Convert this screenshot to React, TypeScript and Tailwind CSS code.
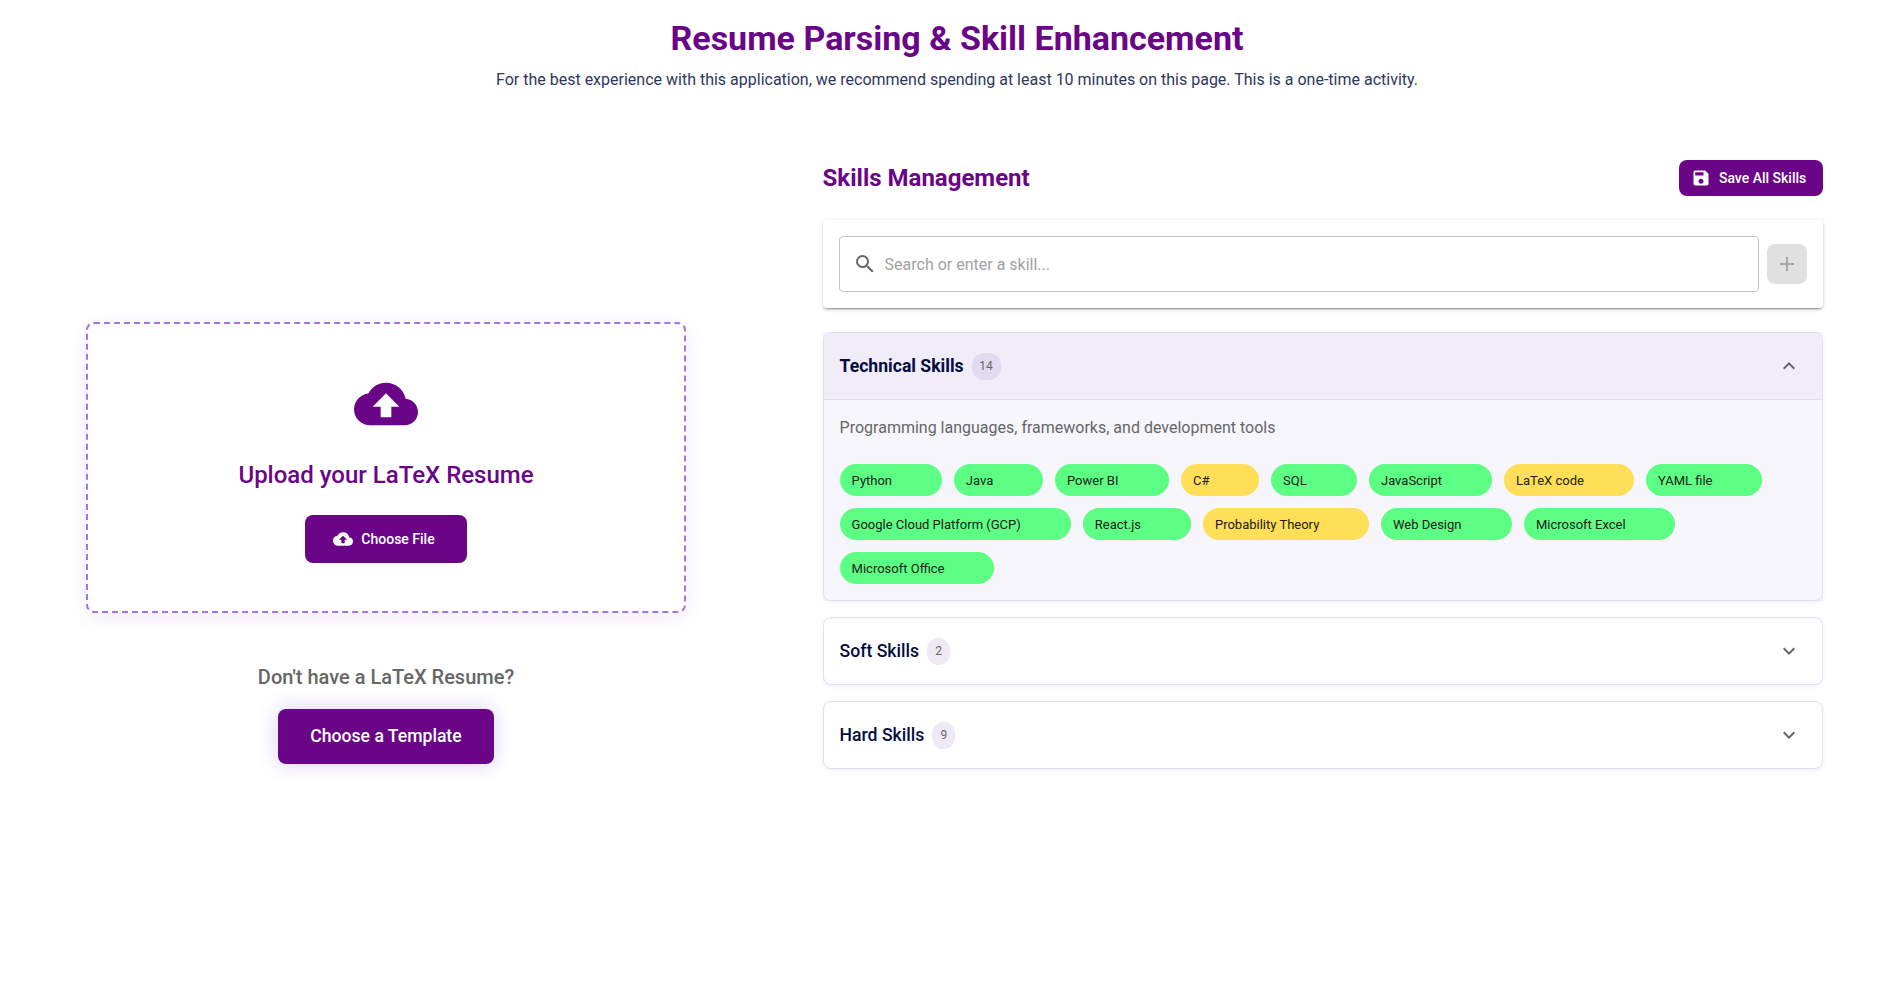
import { MdCloudUpload, MdSave, MdSearch, MdAdd, MdExpandMore } from "react-icons/md";

const skills: [string, number, boolean?][] = [
  ["Python", 102.2], ["Java", 89.2], ["Power BI", 114], ["C#", 78, true], ["SQL", 86], ["JavaScript", 123],
  ["LaTeX code", 130, true], ["YAML file", 116], ["Google Cloud Platform (GCP)", 231.2], ["React.js", 108.2],
  ["Probability Theory", 166, true], ["Web Design", 131], ["Microsoft Excel", 151], ["Microsoft Office", 154],
];

function Closed({ title, count }: { title: string; count: number }) {
  return (
    <section className="mt-4 flex h-[68px] items-center rounded-lg border border-[#e2dff2] bg-white px-4 shadow-[0_2px_4px_rgba(90,60,160,0.08)]">
      <h3 className="text-[17.6px] font-medium text-[#030b3f]">{title}</h3>
      <span className="ml-2 flex h-[27px] w-[23px] items-center justify-center rounded-[12px] bg-[#efe9f6] pb-px text-[12px] text-[#666]">{count}</span>
      <MdExpandMore className="mr-[5px] ml-auto size-6 text-[#666]" />
    </section>
  );
}

export default function App() {
  return (
    <main className="h-[985px] overflow-hidden bg-white font-['Roboto',sans-serif]">
      <header className="pt-[17px] pl-[26px] text-center">
        <h1 className="text-[34px] leading-[42px] font-bold text-[#6a0588]">Resume Parsing &amp; Skill Enhancement</h1>
        <p className="mt-[9px] text-[16px] leading-6 text-[#2f365f]">For the best experience with this application, we recommend spending at least 10 minutes on this page. This is a one-time activity.</p>
      </header>
      <div className="flex pt-[68px] pl-[86px]">
        <div className="flex w-[600px] flex-col items-center pt-[162px]">
          <section className="flex h-[291px] w-[600px] flex-col items-center rounded-lg border-2 border-dashed border-[#a374e6] pt-[48px] shadow-[0_4px_20px_rgba(106,60,190,0.1)]">
            <MdCloudUpload className="size-16 text-[#6a0588]" />
            <h2 className="mt-[23px] text-[24px] leading-8 font-medium text-[#6a0588]">Upload your LaTeX Resume</h2>
            <button className="mt-6 flex h-12 w-[162px] items-center justify-center gap-2 rounded-lg bg-[#6a0588] pr-1 text-[14px] font-medium text-white"><MdCloudUpload className="size-5" />Choose File</button>
          </section>
          <p className="mt-[48px] text-[20px] leading-8 font-medium text-[#666]">Don't have a LaTeX Resume?</p>
          <button className="mt-4 h-[55px] w-[216px] rounded-lg bg-[#6a0588] text-[17.6px] font-medium text-white shadow-[0_0_20px_rgba(106,60,190,0.25)]">Choose a Template</button>
        </div>
        <div className="ml-[136.6px] w-[1000px]">
          <div className="flex h-9 items-center justify-between">
            <h2 className="text-[24px] font-bold text-[#6a0588]">Skills Management</h2>
            <button className="flex h-9 w-[144px] items-center justify-center gap-2 rounded-lg bg-[#6a0588] pr-1 text-[14px] font-medium text-white"><MdSave className="size-5" />Save All Skills</button>
          </div>
          <div className="mt-6 flex h-[88px] items-center gap-2 rounded bg-white p-4 shadow-[0_3px_1px_-2px_rgba(0,0,0,0.2),0_2px_2px_0_rgba(0,0,0,0.14),0_1px_5px_0_rgba(0,0,0,0.12)]">
            <div className="flex h-14 flex-1 items-center rounded border border-[#c4c4c4] px-[13px]"><MdSearch className="size-6 text-[#666]" /><span className="ml-2 pt-px text-[16px] text-[#a2a2a2]">Search or enter a skill...</span></div>
            <button className="flex size-10 items-center justify-center rounded-lg bg-[#e0e0e0] text-[#a6a6a6]"><MdAdd className="size-6" /></button>
          </div>
          <div className="mt-6 bg-[#f7f6fd]">
            <section className="h-[269px] overflow-hidden rounded-lg border border-[#e2dff2] bg-[#f7f6fd] shadow-[0_2px_4px_rgba(90,60,160,0.08)]">
              <div className="flex h-[67px] items-center border-b border-[#e2dff2] bg-[#f0edf9] px-4">
                <h3 className="text-[17.6px] font-bold text-[#030b3f]">Technical Skills</h3>
                <span className="ml-2 flex h-[27px] w-[29px] items-center justify-center rounded-[12px] bg-[#e2daf1] pb-px text-[12px] text-[#666]">14</span>
                <MdExpandMore className="mr-[5px] ml-auto size-6 rotate-180 text-[#666]" />
              </div>
              <p className="mt-4 px-4 text-[16px] leading-6 text-[#666]">Programming languages, frameworks, and development tools</p>
              <div className="mt-6 flex flex-wrap gap-3 px-4">
                {skills.map(([name, width, yellow]) => <span key={name} style={{ width }} className={`flex h-8 items-center rounded-full px-3 pt-px text-[13px] whitespace-nowrap text-[#202020] ${yellow ? "bg-[#ffdf57]" : "bg-[#5cff83]"}`}>{name}</span>)}
              </div>
            </section>
          </div>
          <Closed title="Soft Skills" count={2} />
          <Closed title="Hard Skills" count={9} />
        </div>
      </div>
    </main>
  );
}
